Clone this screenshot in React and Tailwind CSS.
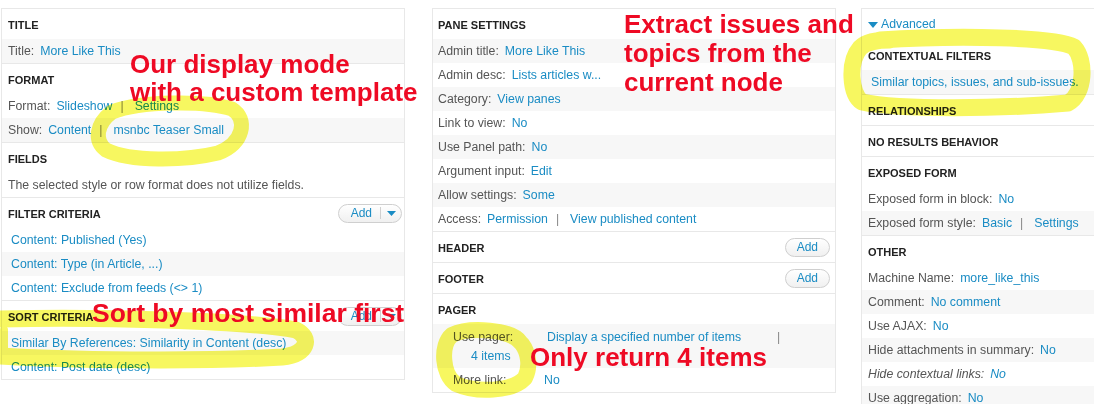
import React from "react";

const LINK = "text-[#1a8cc4]";

function Row({ shade, children, pl = "pl-[6px]", italic }) {
  return (
    <div
      className={`flex h-[24px] items-center whitespace-nowrap pt-px ${pl} ${shade ? "bg-[#f7f7f7]" : ""} ${italic ? "italic" : ""}`}
    >
      {children}
    </div>
  );
}

function KV({ label, value, shade, pl, italic, extra }) {
  return (
    <Row shade={shade} pl={pl} italic={italic}>
      <span className="text-[#555]">{label}</span>
      <span className={`ml-[6px] ${LINK}`}>{value}</span>
      {extra}
    </Row>
  );
}

function Pipe({ children }) {
  return (
    <>
      <span className="ml-[8px] text-[#888]">|</span>
      <span className={`ml-[11px] ${LINK}`}>{children}</span>
    </>
  );
}

function AddBtn({ drop }) {
  return (
    <div className="-mt-[3px] flex h-[19px] items-center rounded-full border border-[#cfcfcf] bg-linear-to-b from-white to-[#f0f0f0] text-[12px] font-normal leading-[17px] normal-case text-[#1a8cc4]">
      <span className={drop ? "pl-[12px] pr-[8px]" : "px-[11px]"}>Add</span>
      {drop && (
        <>
          <span className="h-[12px] w-px bg-[#d0d0d0]" />
          <span className="flex items-center pl-[6px] pr-[5px]">
            <svg width="9" height="5" viewBox="0 0 9 5">
              <path d="M0 0 H9 L4.5 5 Z" fill="#1a8cc4" />
            </svg>
          </span>
        </>
      )}
    </div>
  );
}

function Head({ children, btn, pl = "pl-[6px]", pr = "pr-[2px]" }) {
  return (
    <div
      className={`flex h-[30px] items-center justify-between pt-[3px] ${pl} ${pr} text-[11px] font-bold uppercase text-[#222]`}
    >
      <span>{children}</span>
      {btn}
    </div>
  );
}

function Bucket({ children, last }) {
  return <div className={last ? "" : "border-b border-[#e8e8e8]"}>{children}</div>;
}

function LeftPanel() {
  return (
    <div className="w-[404px] shrink-0 border border-[#e8e8e8]">
      <Bucket>
        <Head>Title</Head>
        <KV shade label="Title:" value="More Like This" />
      </Bucket>
      <Bucket>
        <Head>Format</Head>
        <KV label="Format:" value="Slideshow" extra={<Pipe>Settings</Pipe>} />
        <KV shade label="Show:" value="Content" extra={<Pipe>msnbc Teaser Small</Pipe>} />
      </Bucket>
      <Bucket>
        <Head>Fields</Head>
        <Row>
          <span className="text-[#555]">The selected style or row format does not utilize fields.</span>
        </Row>
      </Bucket>
      <Bucket>
        <Head btn={<AddBtn drop />}>Filter criteria</Head>
        <Row pl="pl-[9px]">
          <span className={LINK}>Content: Published (Yes)</span>
        </Row>
        <Row shade pl="pl-[9px]">
          <span className={LINK}>Content: Type (in Article, ...)</span>
        </Row>
        <Row pl="pl-[9px]">
          <span className={LINK}>Content: Exclude from feeds (&lt;&gt; 1)</span>
        </Row>
      </Bucket>
      <Bucket last>
        <Head btn={<AddBtn drop />}>Sort criteria</Head>
        <Row shade pl="pl-[9px]">
          <span className={LINK}>Similar By References: Similarity in Content (desc)</span>
        </Row>
        <Row pl="pl-[9px]">
          <span className={LINK}>Content: Post date (desc)</span>
        </Row>
      </Bucket>
    </div>
  );
}

function MiddlePanel() {
  const p = "pl-[5px]";
  return (
    <div className="ml-[27px] w-[404px] shrink-0 border border-[#e8e8e8]">
      <Bucket>
        <Head pl={p}>Pane settings</Head>
        <KV pl={p} shade label="Admin title:" value="More Like This" />
        <KV pl={p} label="Admin desc:" value="Lists articles w..." />
        <KV pl={p} shade label="Category:" value="View panes" />
        <KV pl={p} label="Link to view:" value="No" />
        <KV pl={p} shade label="Use Panel path:" value="No" />
        <KV pl={p} label="Argument input:" value="Edit" />
        <KV pl={p} shade label="Allow settings:" value="Some" />
        <KV pl={p} label="Access:" value="Permission" extra={<Pipe>View published content</Pipe>} />
      </Bucket>
      <Bucket>
        <Head pl={p} pr="pr-[5px]" btn={<AddBtn />}>Header</Head>
      </Bucket>
      <Bucket>
        <Head pl={p} pr="pr-[5px]" btn={<AddBtn />}>Footer</Head>
      </Bucket>
      <Bucket last>
        <Head pl={p}>Pager</Head>
        <div className="h-[44px] bg-[#f7f7f7] pl-[20px] pt-[4px] whitespace-nowrap">
          <div className="flex h-[19px] items-center">
            <span className="w-[94px] text-[#555]">Use pager:</span>
            <span className={`w-[230px] ${LINK}`}>Display a specified number of items</span>
            <span className="text-[#888]">|</span>
          </div>
          <div className="flex h-[19px] items-center pl-[18px]">
            <span className={LINK}>4 items</span>
          </div>
        </div>
        <div className="flex h-[24px] items-center pl-[20px] pt-px whitespace-nowrap">
          <span className="w-[91px] text-[#555]">More link:</span>
          <span className={LINK}>No</span>
        </div>
      </Bucket>
    </div>
  );
}

function RightPanel() {
  return (
    <div className="ml-[25px] w-[270px] shrink-0 border border-[#e8e8e8]">
      <div className="flex h-[31px] items-center pl-[6px]">
        <svg width="10" height="6" viewBox="0 0 10 6" className="mr-[3px]">
          <path d="M0 0 H10 L5 6 Z" fill="#1a8cc4" />
        </svg>
        <span className={LINK}>Advanced</span>
      </div>
      <Bucket>
        <Head>Contextual filters</Head>
        <Row shade pl="pl-[9px]">
          <span className={LINK}>Similar topics, issues, and sub-issues.</span>
        </Row>
      </Bucket>
      <Bucket>
        <Head>Relationships</Head>
      </Bucket>
      <Bucket>
        <Head>No results behavior</Head>
      </Bucket>
      <Bucket>
        <Head>Exposed form</Head>
        <KV label="Exposed form in block:" value="No" />
        <KV shade label="Exposed form style:" value="Basic" extra={<Pipe>Settings</Pipe>} />
      </Bucket>
      <Bucket last>
        <Head>Other</Head>
        <KV label="Machine Name:" value="more_like_this" />
        <KV shade label="Comment:" value="No comment" />
        <KV label="Use AJAX:" value="No" />
        <KV shade label="Hide attachments in summary:" value="No" />
        <KV italic label="Hide contextual links:" value="No" />
        <KV shade label="Use aggregation:" value="No" />
      </Bucket>
    </div>
  );
}

export default function App() {
  return (
    <div className="relative h-[404px] w-[1094px] overflow-hidden bg-white font-['Liberation_Sans',Arial,sans-serif] text-[12.3px]">
      <div className="flex items-start pl-px pt-[8px]">
        <LeftPanel />
        <MiddlePanel />
        <RightPanel />
      </div>

      {/* highlighter strokes */}
      <svg
        className="pointer-events-none absolute left-0 top-0 mix-blend-multiply"
        width="1094"
        height="404"
        viewBox="0 0 1094 404"
      >
        <g fill="none" stroke="#f7f760" strokeLinecap="round" strokeLinejoin="round">
          <path
            strokeWidth="15"
            d="M112 112 C 140 101, 205 100, 232 109 C 248 119, 244 143, 218 153 C 185 161, 130 162, 106 150 C 94 141, 96 124, 112 112"
          />
          <path
            strokeWidth="17"
            d="M0 319 C 100 317, 240 320, 296 330 C 312 338, 308 354, 282 357 C 200 362, 60 360, 0 356"
          />
          <path strokeWidth="8" d="M4 330 L 4 352" />
          <path
            strokeWidth="17"
            d="M880 40 C 960 35, 1055 37, 1074 47 C 1086 60, 1085 94, 1068 103 C 1000 109, 900 110, 862 102 C 850 94, 848 62, 860 48 C 866 42, 875 40, 890 40"
          />
          <path
            strokeWidth="16"
            d="M520 342 C 512 330, 470 326, 452 335 C 440 345, 442 375, 456 384 C 476 393, 512 392, 525 378 C 531 366, 528 352, 522 344"
          />
        </g>
      </svg>

      {/* annotations */}
      <div className="pointer-events-none absolute left-[130px] top-[50px] whitespace-nowrap text-[26px] font-bold leading-[28px] text-[#ee0a24]">
        Our display mode
        <br />
        with a custom template
      </div>
      <div className="pointer-events-none absolute left-[624px] top-[10px] whitespace-nowrap text-[26px] font-bold leading-[29px] text-[#ee0a24]">
        Extract issues and
        <br />
        topics from the
        <br />
        current node
      </div>
      <div className="pointer-events-none absolute left-[92px] top-[299px] whitespace-nowrap text-[26.5px] font-bold leading-[28px] text-[#ee0a24]">
        Sort by most similar first
      </div>
      <div className="pointer-events-none absolute left-[530px] top-[343px] whitespace-nowrap text-[26px] font-bold leading-[28px] text-[#ee0a24]">
        Only return 4 items
      </div>
    </div>
  );
}
